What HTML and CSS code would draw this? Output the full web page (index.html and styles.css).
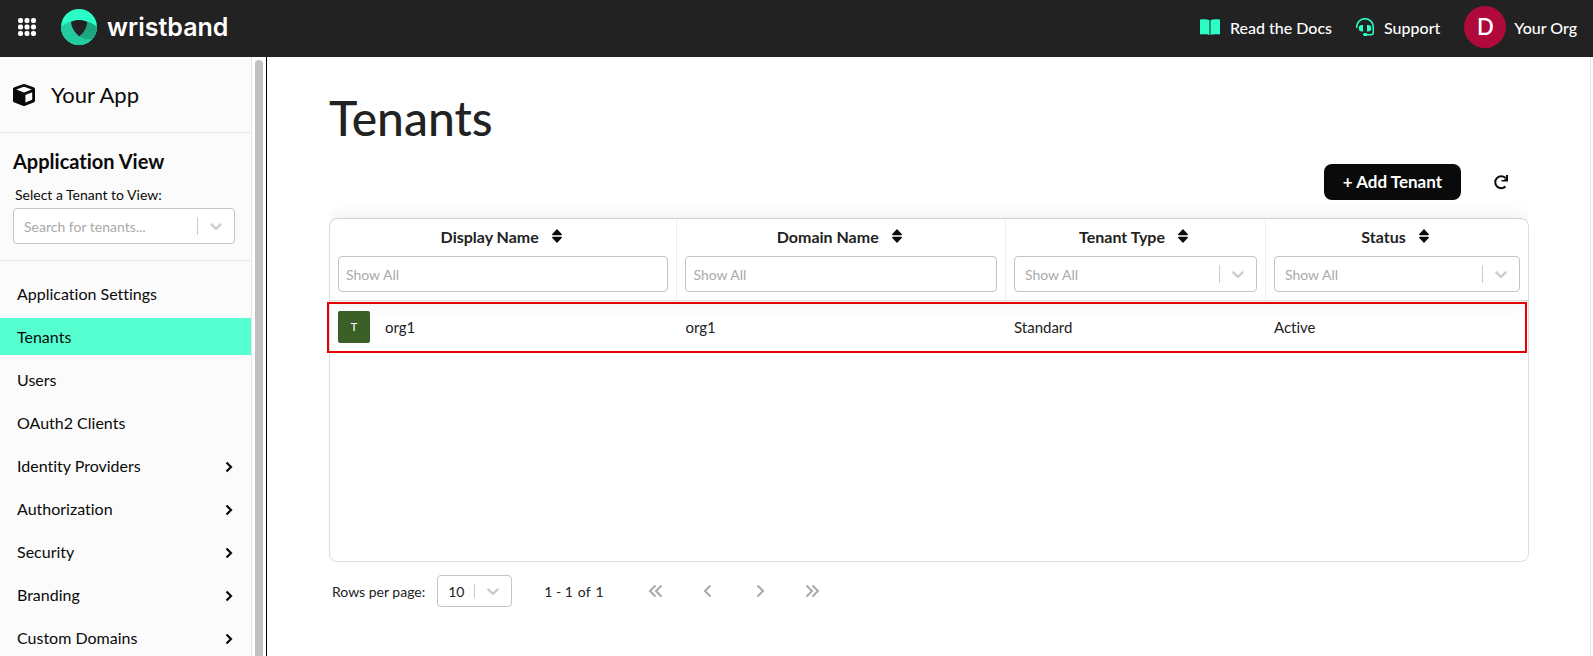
FILE: index.html
```html
<!DOCTYPE html>
<html lang="en">
<head>
  <meta charset="UTF-8">
  <meta name="viewport" content="width=device-width, initial-scale=1">
  <title>Tenants | Wristband</title>
  <link rel="stylesheet" href="styles.css">
</head>
<body>
  <!-- shared icons -->
  <svg class="icon-defs" aria-hidden="true">
    <symbol id="chevron-down" viewBox="0 0 20 20">
      <path d="M4.516 7.548c0.436-0.446 1.043-0.481 1.576 0l3.908 3.747 3.908-3.747c0.533-0.481 1.141-0.446 1.574 0 0.436 0.445 0.408 1.197 0 1.615-0.406 0.418-4.695 4.502-4.695 4.502-0.217 0.223-0.502 0.335-0.787 0.335s-0.57-0.112-0.789-0.335c0 0-4.287-4.084-4.695-4.502s-0.436-1.17 0-1.615z"/>
    </symbol>
    <symbol id="chevron-right" viewBox="0 0 10 12">
      <path d="M2.500 1.500 7 6l-4.500 4.500" fill="none" stroke="currentColor" stroke-width="2.200"/>
    </symbol>
    <symbol id="sort" viewBox="0 0 10 14">
      <path d="M5 0 9.700 5c.5.6.2 1.200-.5 1.200H.8C.1 6.200-.2 5.600.3 5zM5 14 9.700 9c.5-.6.2-1.200-.5-1.200H.8c-.7 0-1 .6-.5 1.200z"/>
    </symbol>
  </svg>

  <header class="topbar">
    <button class="apps" type="button" aria-label="Apps">
      <svg viewBox="0 0 18 18" width="18" height="18">
        <g fill="#fff">
          <rect width="5" height="5" rx="2"/><rect x="6.500" width="5" height="5" rx="2"/><rect x="13" width="5" height="5" rx="2"/>
          <rect y="6.500" width="5" height="5" rx="2"/><rect x="6.500" y="6.500" width="5" height="5" rx="2"/><rect x="13" y="6.500" width="5" height="5" rx="2"/>
          <rect y="13" width="5" height="5" rx="2"/><rect x="6.500" y="13" width="5" height="5" rx="2"/><rect x="13" y="13" width="5" height="5" rx="2"/>
        </g>
      </svg>
    </button>
    <a class="brand" href="#">
      <svg viewBox="0 0 36 36" width="36" height="36" aria-hidden="true">
        <circle cx="18" cy="18" r="18" fill="#2bffc6"/>
        <path d="M0 18C3 15 7 13 10.500 12.500 11.500 19 15 24.500 18.500 27.500 23 30.500 28 31 31.500 30A18 18 0 0 1 0 18z" fill="#22cc9e"/>
        <path d="M36 18C33 15 29 13 25.500 12.500 25 19 22 24 18.500 27.500 23 30.500 28 31 31.500 30A18 18 0 0 0 36 18z" fill="#1da580"/>
        <path d="M10 12.800C15 10.300 21 10.300 26.200 12.800 26 19 22.500 24 18.300 27.500 14 24 10.500 19 10 12.800z" fill="#222"/>
      </svg>
      <span>wristband</span>
    </a>
    <nav class="toplinks">
      <a href="#">
        <svg viewBox="0 0 20 16" width="20" height="16" aria-hidden="true">
          <path d="M9.500 1.200C7.500.2 3.500 0 1 .3.400.400 0 .7 0 1.300v13.300c0 .6.400 1 1 .9 2.500-.3 6-.3 8 .4.300.1.500 0 .5-.4zM10.500 1.200C12.500.2 16.500 0 19 .3c.6.100 1 .400 1 1v13.300c0 .6-.4 1-1 .9-2.500-.3-6-.3-8 .4-.3.100-.5 0-.5-.4z" fill="#2bffc6"/>
        </svg>
        Read the Docs
      </a>
      <a href="#">
        <svg viewBox="0 0 18 18" width="18" height="18" aria-hidden="true">
          <path d="M.7 10V9a8.300 8.300 0 0 1 16.600 0v5.500a2.200 2.200 0 0 1-2.200 2.200H9" fill="none" stroke="#2bffc6" stroke-width="1.500"/>
          <path d="M7 7v6.500H6a3.200 3.200 0 0 1 0-6.500zM11 7v6.500h1a3.200 3.200 0 0 0 0-6.500z" fill="#2bffc6"/>
          <rect x="7" y="15" width="4.500" height="3" rx="1.500" fill="#2bffc6"/>
        </svg>
        Support
      </a>
      <a class="org" href="#"><span class="avatar">D</span>Your Org</a>
    </nav>
  </header>

  <div class="layout">
    <aside class="sidebar">
      <div class="sidebar-body">
        <div class="app-name">
          <svg viewBox="0 0 22 22" width="22" height="22" aria-hidden="true">
            <path d="M9.800.3a3.500 3.500 0 0 1 2.400 0l8.400 3c.9.300 1.400 1.100 1.400 2v11.200c0 .9-.5 1.700-1.400 2l-8.400 3.200a3.500 3.500 0 0 1-2.400 0l-8.400-3.200c-.9-.3-1.400-1.100-1.400-2V5.300c0-.9.500-1.700 1.400-2zM11 2.800 3.200 5.500 11 8.400l7.800-2.900zM12.400 18.500l6.800-2.700V8.300l-6.800 2.600z" fill="#0a0a0a" fill-rule="evenodd"/>
          </svg>
          Your App
        </div>

        <section class="view">
          <h2>Application View</h2>
          <label for="tenant-search">Select a Tenant to View:</label>
          <div class="select">
            <select id="tenant-search"><option>Search for tenants...</option></select>
            <span class="arrow"><svg><use href="#chevron-down"/></svg></span>
          </div>
        </section>

        <nav class="menu">
          <a href="#">Application Settings</a>
          <a class="active" href="#">Tenants</a>
          <a href="#">Users</a>
          <a href="#">OAuth2 Clients</a>
          <a href="#">Identity Providers <svg><use href="#chevron-right"/></svg></a>
          <a href="#">Authorization <svg><use href="#chevron-right"/></svg></a>
          <a href="#">Security <svg><use href="#chevron-right"/></svg></a>
          <a href="#">Branding <svg><use href="#chevron-right"/></svg></a>
          <a href="#">Custom Domains <svg><use href="#chevron-right"/></svg></a>
        </nav>
      </div>
      <div class="scrollbar"></div>
    </aside>

    <main class="content">
      <h1>Tenants</h1>

      <div class="toolbar">
        <button class="add" type="button">+ Add Tenant</button>
        <button class="refresh" type="button" aria-label="Refresh">
          <svg viewBox="0 0 16 16" width="16" height="16">
            <path d="M12.500 12.500A6 6 0 1 1 12.500 4" fill="none" stroke="#0a0a0a" stroke-width="2"/>
            <path d="M15 1v6.500H8.500V6H11l2-2V1z" fill="#0a0a0a"/>
          </svg>
        </button>
      </div>

      <div class="table-wrap">
        <table>
          <colgroup><col class="col-display"><col><col class="col-type"><col class="col-status"></colgroup>
          <thead>
            <tr>
              <th>
                <button class="sort" type="button">Display Name <svg><use href="#sort"/></svg></button>
                <input type="text" placeholder="Show All" aria-label="Filter by display name">
              </th>
              <th>
                <button class="sort" type="button">Domain Name <svg><use href="#sort"/></svg></button>
                <input type="text" placeholder="Show All" aria-label="Filter by domain name">
              </th>
              <th>
                <button class="sort" type="button">Tenant Type <svg><use href="#sort"/></svg></button>
                <div class="select">
                  <select aria-label="Filter by tenant type"><option>Show All</option></select>
                  <span class="arrow"><svg><use href="#chevron-down"/></svg></span>
                </div>
              </th>
              <th>
                <button class="sort" type="button">Status <svg><use href="#sort"/></svg></button>
                <div class="select">
                  <select aria-label="Filter by status"><option>Show All</option></select>
                  <span class="arrow"><svg><use href="#chevron-down"/></svg></span>
                </div>
              </th>
            </tr>
          </thead>
          <tbody>
            <tr>
              <td><div class="tenant"><span class="tile">T</span>org1</div></td>
              <td>org1</td>
              <td>Standard</td>
              <td>Active</td>
            </tr>
          </tbody>
        </table>
        <div class="highlight"></div>
      </div>

      <div class="pagination">
        <label for="rows">Rows per page:</label>
        <div class="select rows">
          <select id="rows"><option>10</option></select>
          <span class="arrow"><svg><use href="#chevron-down"/></svg></span>
        </div>
        <span class="range"><span>1 - 1</span> <span>of</span> <span>1</span></span>
        <div class="pager">
          <button type="button" aria-label="First page"><svg viewBox="0 0 16 14"><path d="M7.500 1.500 2 7l5.500 5.500M13.500 1.500 8 7l5.500 5.500"/></svg></button>
          <button type="button" aria-label="Previous page"><svg viewBox="0 0 16 14"><path d="M10.500 1.500 5 7l5.500 5.500"/></svg></button>
          <button type="button" aria-label="Next page"><svg viewBox="0 0 16 14"><path d="M5.500 1.500 11 7l-5.500 5.500"/></svg></button>
          <button type="button" aria-label="Last page"><svg viewBox="0 0 16 14"><path d="M2.500 1.500 8 7l-5.500 5.500M8.500 1.500 14 7l-5.500 5.500"/></svg></button>
        </div>
      </div>
    </main>
  </div>
</body>
</html>
```
FILE: styles.css
```css
* {
  box-sizing: border-box;
}

body {
  margin: 0;
  height: 100vh;
  display: flex;
  flex-direction: column;
  overflow: hidden;
  font-family: Lato, "Liberation Sans", sans-serif;
  font-size: 16px;
  font-variant-ligatures: none;
  color: #222;
  background: #fff;
}

button,
input,
select {
  font: inherit;
  font-variant-ligatures: none;
  color: inherit;
}

button {
  border: 0;
  padding: 0;
  background: none;
  cursor: pointer;
}

a {
  color: inherit;
  text-decoration: none;
}

.icon-defs {
  display: none;
}

/* top bar */
.topbar {
  display: flex;
  align-items: center;
  flex: none;
  height: 57px;
  padding: 0 16px 3px 18px;
  color: #fff;
  background: #222;
}

.apps,
.brand {
  display: flex;
  align-items: center;
}

.brand {
  gap: 10px;
  margin-left: 25px;
  font-family: Inter, Lato, sans-serif;
  font-size: 25px;
  font-weight: 600;
}

.toplinks {
  display: flex;
  align-items: center;
  gap: 24px;
  margin-left: auto;
}

.toplinks a {
  display: flex;
  align-items: center;
  gap: 10px;
  font-weight: 500;
}

.toplinks .org {
  gap: 8px;
}

.avatar {
  display: flex;
  align-items: center;
  justify-content: center;
  width: 42px;
  height: 42px;
  padding-bottom: 2px;
  border-radius: 50%;
  font-size: 22px;
  font-weight: 600;
  background: #b00a3c;
}

/* sidebar */
.layout {
  display: flex;
  flex: 1;
  min-height: 0;
}

.sidebar {
  display: flex;
  flex: none;
  width: 267px;
  border-right: 1px solid #000;
  overflow: hidden;
}

.sidebar-body {
  flex: 1;
  border-right: 1px solid #e5e5e5;
  color: #0a0a0a;
  background: #fbfbfb;
}

.scrollbar {
  width: 8px;
  margin: 3px 3px 0;
  border-radius: 4px 4px 0 0;
  background: #c1c1c1;
}

.app-name {
  display: flex;
  align-items: center;
  gap: 16px;
  height: 76px;
  padding-left: 13px;
  border-bottom: 1px solid #e5e5e5;
  font-size: 22px;
}

.view {
  padding: 15px 16px 16px 13px;
  border-bottom: 1px solid #e5e5e5;
}

.view h2 {
  margin: 0 0 13px;
  font-size: 20px;
  line-height: 26px;
}

.view label {
  display: block;
  margin: 0 2px 5px;
  font-size: 14px;
  line-height: 16px;
}

.menu {
  display: flex;
  flex-direction: column;
  gap: 6px;
  padding-top: 14px;
}

.menu a {
  display: flex;
  flex: none;
  align-items: center;
  justify-content: space-between;
  height: 37px;
  padding: 0 17px;
}

.menu .active {
  background: #55ffd0;
}

.menu svg {
  width: 10px;
  height: 12px;
  margin-top: 3px;
}

/* form controls */
.select {
  position: relative;
}

.select select,
th input {
  display: block;
  width: 100%;
  height: 36px;
  border: 1px solid #c4c4c4;
  border-radius: 4px;
  font-size: 14px;
  font-weight: 400;
  color: #aaa;
  background: #fff;
  appearance: none;
}

.select select {
  padding: 0 48px 0 10px;
}

th input {
  padding: 0 7px;
}

th input::placeholder {
  color: #aaa;
}

.arrow {
  position: absolute;
  top: 9px;
  right: 1px;
  bottom: 9px;
  display: flex;
  align-items: center;
  padding: 0 8px;
  border-left: 1px solid #ccc;
  pointer-events: none;
}

.arrow svg {
  width: 20px;
  height: 20px;
  fill: #ccc;
}

/* main */
.content {
  flex: 1;
  min-width: 0;
  margin-right: 2px;
  padding: 31px 61px 0 62px;
  border-right: 1px solid #e5e5e5;
}

h1 {
  margin: 0;
  font-size: 48px;
  font-weight: 500;
  line-height: 60px;
}

.toolbar {
  display: flex;
  align-items: center;
  justify-content: flex-end;
  gap: 32px;
  margin-top: 16px;
  padding-right: 20px;
}

.add {
  height: 36px;
  padding: 0 19px 2px;
  border-radius: 8px;
  font-size: 17px;
  font-weight: 700;
  color: #fff;
  background: #0a0a0a;
}

.refresh {
  display: flex;
}

.table-wrap {
  position: relative;
  min-height: 344px;
  margin-top: 18px;
  border: 1px solid #ddd;
  border-radius: 8px;
}

table {
  width: 100%;
  table-layout: fixed;
  border-collapse: separate;
  border-spacing: 0;
}

thead {
  border-radius: 8px 8px 0 0;
  box-shadow: 0 0 20px rgba(0, 0, 0, 0.1);
  clip-path: inset(-20px 0);
}

.col-display {
  width: 29%;
}

.col-type {
  width: 260px;
}

.col-status {
  width: 262px;
}

th {
  padding: 7px 8px 8px;
  border-right: 1px solid #eee;
  border-bottom: 1px solid #ddd;
}

th:last-child {
  border-right: 0;
}

.sort {
  display: flex;
  align-items: center;
  justify-content: center;
  gap: 13px;
  width: 100%;
  height: 20px;
  margin-bottom: 10px;
  padding-right: 4px;
  font-weight: 700;
}

.sort svg {
  width: 10px;
  height: 14px;
  fill: #0a0a0a;
}

td {
  height: 52px;
  padding: 0 8px 1px;
  font-size: 15px;
}

.tenant {
  display: flex;
  align-items: center;
  gap: 15px;
}

.tile {
  display: flex;
  align-items: center;
  justify-content: center;
  width: 32px;
  height: 32px;
  border-radius: 2px;
  font-size: 11px;
  font-weight: 500;
  color: #fff;
  background: #3a5f27;
}

/* frame drawn over the first row */
.highlight {
  position: absolute;
  top: 83px;
  left: -3px;
  right: 1px;
  height: 51px;
  border: 2px solid #e60000;
  pointer-events: none;
}

.pagination {
  display: flex;
  align-items: center;
  margin-top: 13px;
  padding-left: 3px;
  font-size: 14px;
}

.rows {
  width: 75px;
  margin: 0 32px 0 12px;
}

.rows select {
  height: 32px;
  padding: 0 0 0 10px;
  color: #222;
}

.range {
  display: flex;
  gap: 5px;
}

.pager {
  display: flex;
  gap: 36px;
  margin-left: 44px;
}

.pager svg {
  display: block;
  width: 16px;
  height: 14px;
  fill: none;
  stroke: #aaa;
  stroke-width: 2;
}
```
